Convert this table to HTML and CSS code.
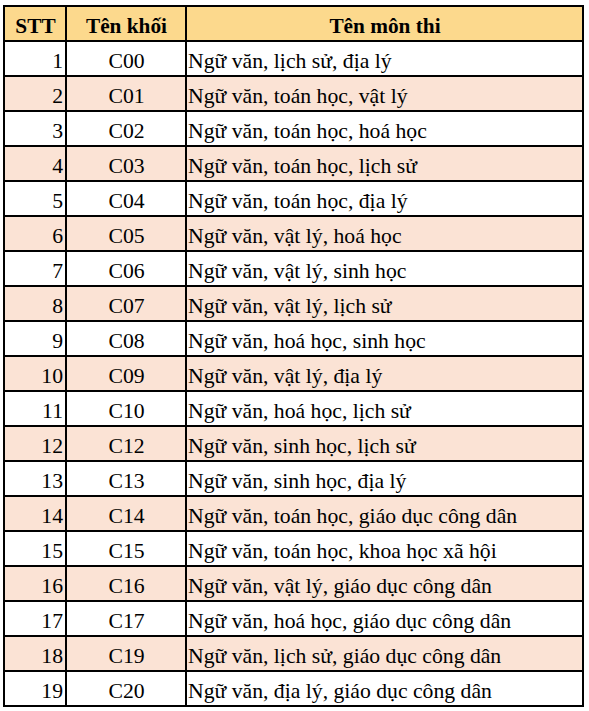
FILE: index.html
```html
<!DOCTYPE html>
<html lang="vi">
<head>
<meta charset="utf-8">
<link rel="stylesheet" href="styles.css">
</head>
<body>
<table class="tbl">
<colgroup><col class="c1"><col class="c2"><col class="c3"></colgroup>
<thead>
<tr><th>STT</th><th>Tên khối</th><th>Tên môn thi</th></tr>
</thead>
<tbody>
<tr><td class="n">1</td><td class="k">C00</td><td class="m">Ngữ văn, lịch sử, địa lý</td></tr>
<tr class="p"><td class="n">2</td><td class="k">C01</td><td class="m">Ngữ văn, toán học, vật lý</td></tr>
<tr><td class="n">3</td><td class="k">C02</td><td class="m">Ngữ văn, toán học, hoá học</td></tr>
<tr class="p"><td class="n">4</td><td class="k">C03</td><td class="m">Ngữ văn, toán học, lịch sử</td></tr>
<tr><td class="n">5</td><td class="k">C04</td><td class="m">Ngữ văn, toán học, địa lý</td></tr>
<tr class="p"><td class="n">6</td><td class="k">C05</td><td class="m">Ngữ văn, vật lý, hoá học</td></tr>
<tr><td class="n">7</td><td class="k">C06</td><td class="m">Ngữ văn, vật lý, sinh học</td></tr>
<tr class="p"><td class="n">8</td><td class="k">C07</td><td class="m">Ngữ văn, vật lý, lịch sử</td></tr>
<tr><td class="n">9</td><td class="k">C08</td><td class="m">Ngữ văn, hoá học, sinh học</td></tr>
<tr class="p"><td class="n">10</td><td class="k">C09</td><td class="m">Ngữ văn, vật lý, địa lý</td></tr>
<tr><td class="n">11</td><td class="k">C10</td><td class="m">Ngữ văn, hoá học, lịch sử</td></tr>
<tr class="p"><td class="n">12</td><td class="k">C12</td><td class="m">Ngữ văn, sinh học, lịch sử</td></tr>
<tr><td class="n">13</td><td class="k">C13</td><td class="m">Ngữ văn, sinh học, địa lý</td></tr>
<tr class="p"><td class="n">14</td><td class="k">C14</td><td class="m">Ngữ văn, toán học, giáo dục công dân</td></tr>
<tr><td class="n">15</td><td class="k">C15</td><td class="m">Ngữ văn, toán học, khoa học xã hội</td></tr>
<tr class="p"><td class="n">16</td><td class="k">C16</td><td class="m">Ngữ văn, vật lý, giáo dục công dân</td></tr>
<tr><td class="n">17</td><td class="k">C17</td><td class="m">Ngữ văn, hoá học, giáo dục công dân</td></tr>
<tr class="p"><td class="n">18</td><td class="k">C19</td><td class="m">Ngữ văn, lịch sử, giáo dục công dân</td></tr>
<tr><td class="n">19</td><td class="k">C20</td><td class="m">Ngữ văn, địa lý, giáo dục công dân</td></tr>
</tbody>
</table>
</body>
</html>
```
FILE: styles.css
```css
html, body {
  margin: 0;
  padding: 0;
  background: #ffffff;
}
body {
  padding: 5px 0 0 3px;
  color: #000;
}
.tbl {
  border-collapse: collapse;
  width: 581px;
  table-layout: fixed;
  border: 2px solid #000;
  font-family: "Liberation Serif", "Times New Roman", serif;
}
.c1 { width: 62px; }
.c2 { width: 120px; }
.tbl th, .tbl td {
  border: 2px solid #000;
  height: 29px;
  padding: 4px 2px 0 3px;
  font-size: 21.7px;
  line-height: 24px;
  white-space: nowrap;
  vertical-align: middle;
}
.tbl th {
  background: #fcd98d;
  font-weight: bold;
  font-size: 21.3px;
  text-align: center;
}
.n { text-align: right; }
.k { text-align: center; }
.tbl td.m { text-align: left; padding-left: 1px; }
.p td { background: #fbe3d5; }
```
